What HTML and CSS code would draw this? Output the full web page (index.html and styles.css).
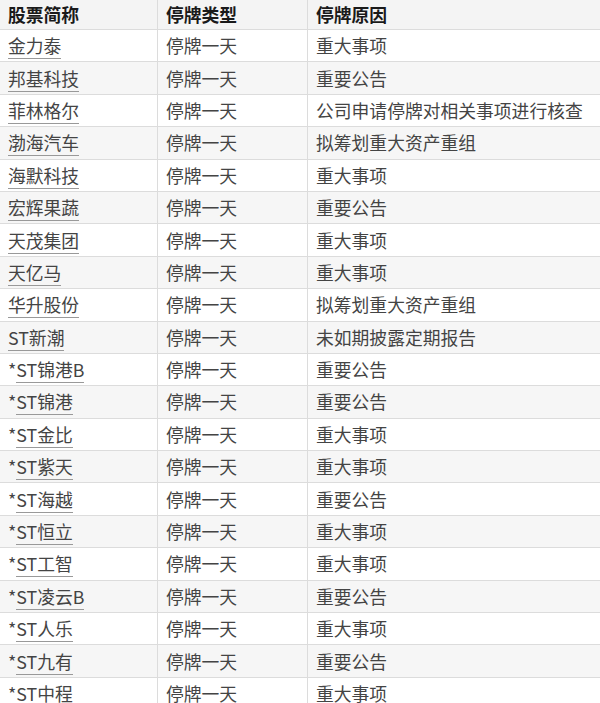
FILE: index.html
```html
<!DOCTYPE html>
<html lang="zh-CN">
<head>
<meta charset="utf-8">
<link rel="stylesheet" href="styles.css">
</head>
<body>
<table class="tbl">
<colgroup><col class="c1"><col class="c2"><col class="c3"></colgroup>
<thead>
<tr><th>股票简称</th><th>停牌类型</th><th>停牌原因</th></tr>
</thead>
<tbody>
<tr><td><span class="lk">金力泰</span></td><td>停牌一天</td><td>重大事项</td></tr>
<tr><td><span class="lk">邦基科技</span></td><td>停牌一天</td><td>重要公告</td></tr>
<tr><td><span class="lk">菲林格尔</span></td><td>停牌一天</td><td>公司申请停牌对相关事项进行核查</td></tr>
<tr><td><span class="lk">渤海汽车</span></td><td>停牌一天</td><td>拟筹划重大资产重组</td></tr>
<tr><td><span class="lk">海默科技</span></td><td>停牌一天</td><td>重大事项</td></tr>
<tr><td><span class="lk">宏辉果蔬</span></td><td>停牌一天</td><td>重要公告</td></tr>
<tr><td><span class="lk">天茂集团</span></td><td>停牌一天</td><td>重大事项</td></tr>
<tr><td><span class="lk">天亿马</span></td><td>停牌一天</td><td>重大事项</td></tr>
<tr><td><span class="lk">华升股份</span></td><td>停牌一天</td><td>拟筹划重大资产重组</td></tr>
<tr><td><span class="lk">ST新潮</span></td><td>停牌一天</td><td>未如期披露定期报告</td></tr>
<tr><td>*<span class="lk">ST锦港B</span></td><td>停牌一天</td><td>重要公告</td></tr>
<tr><td>*<span class="lk">ST锦港</span></td><td>停牌一天</td><td>重要公告</td></tr>
<tr><td>*<span class="lk">ST金比</span></td><td>停牌一天</td><td>重大事项</td></tr>
<tr><td>*<span class="lk">ST紫天</span></td><td>停牌一天</td><td>重大事项</td></tr>
<tr><td>*<span class="lk">ST海越</span></td><td>停牌一天</td><td>重要公告</td></tr>
<tr><td>*<span class="lk">ST恒立</span></td><td>停牌一天</td><td>重大事项</td></tr>
<tr><td>*<span class="lk">ST工智</span></td><td>停牌一天</td><td>重大事项</td></tr>
<tr><td>*<span class="lk">ST凌云B</span></td><td>停牌一天</td><td>重要公告</td></tr>
<tr><td>*<span class="lk">ST人乐</span></td><td>停牌一天</td><td>重大事项</td></tr>
<tr><td>*<span class="lk">ST九有</span></td><td>停牌一天</td><td>重要公告</td></tr>
<tr><td>*<span class="lk">ST中程</span></td><td>停牌一天</td><td>重大事项</td></tr>
</tbody>
</table>
</body>
</html>
```
FILE: styles.css
```css
html, body {
  margin: 0;
  padding: 0;
  background: #fff;
}
body {
  font-family: "Noto Sans CJK SC", "Noto Sans", sans-serif;
  overflow: hidden;
}
.tbl {
  border-collapse: collapse;
  table-layout: fixed;
  width: 601px;
  margin-left: -1px;
  margin-top: -1px;
}
.c1 { width: 158px; }
.c2 { width: 150px; }
.c3 { width: 293px; }
.tbl th, .tbl td {
  border: 1px solid #dcdcdc;
  border-right: 0;
  text-align: left;
  padding: 0 0 0 8px;
  font-size: 17.8px;
  white-space: nowrap;
  overflow: hidden;
}
.tbl th {
  height: 29px;
  font-weight: bold;
  color: #1a1a1a;
  background: #f4f4f4;
  line-height: 29px;
}
.tbl td {
  height: 31.4px;
  line-height: 31px;
  color: #444;
}
.tbl tbody tr:nth-child(even) td {
  background: #f6f6f6;
}
.lk {
  border-bottom: 1px solid #999;
  padding-bottom: 0;
}
```
